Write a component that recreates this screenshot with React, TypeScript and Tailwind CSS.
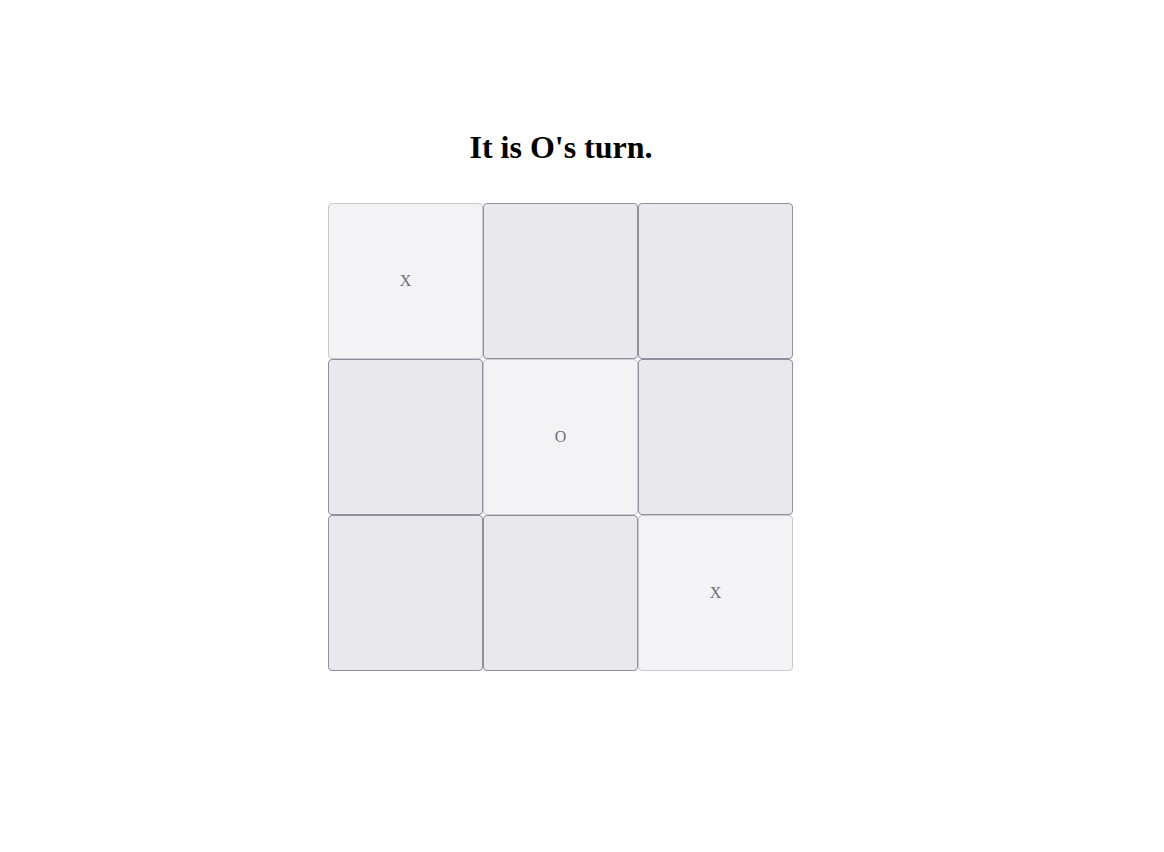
import { useState } from "react";

type Cell = "X" | "O" | null;

const initial: Cell[] = ["X", null, null, null, "O", null, null, null, "X"];

export default function App() {
  const [cells, setCells] = useState<Cell[]>(initial);
  const xCount = cells.filter((c) => c === "X").length;
  const oCount = cells.filter((c) => c === "O").length;
  const turn = xCount > oCount ? "O" : "X";

  const play = (i: number) => {
    if (cells[i]) return;
    const next = [...cells];
    next[i] = turn;
    setCells(next);
  };

  return (
    <main className="min-h-screen bg-white" style={{ fontFamily: '"Liberation Serif", serif' }}>
      <div className="w-[1122px] flex flex-col items-center pt-[129px]">
        {/* Status */}
        <h1 className="text-[32px] font-bold leading-[37px] text-black">It is {turn}'s turn.</h1>

        {/* Board */}
        <div className="mt-[37px] ml-[-1px] grid grid-cols-[repeat(3,155px)] grid-rows-[repeat(3,156px)]">
          {cells.map((cell, i) => (
            <button
              key={i}
              onClick={() => play(i)}
              disabled={cell !== null}
              className={`rounded-[4px] border text-[16px] ${
                cell
                  ? "bg-[#f3f3f5] border-[#c8c8cf] text-[#6d6d75]"
                  : "bg-[#e9e9ed] border-[#8f8f9d] text-black"
              }`}
            >
              {cell}
            </button>
          ))}
        </div>
      </div>
    </main>
  );
}
